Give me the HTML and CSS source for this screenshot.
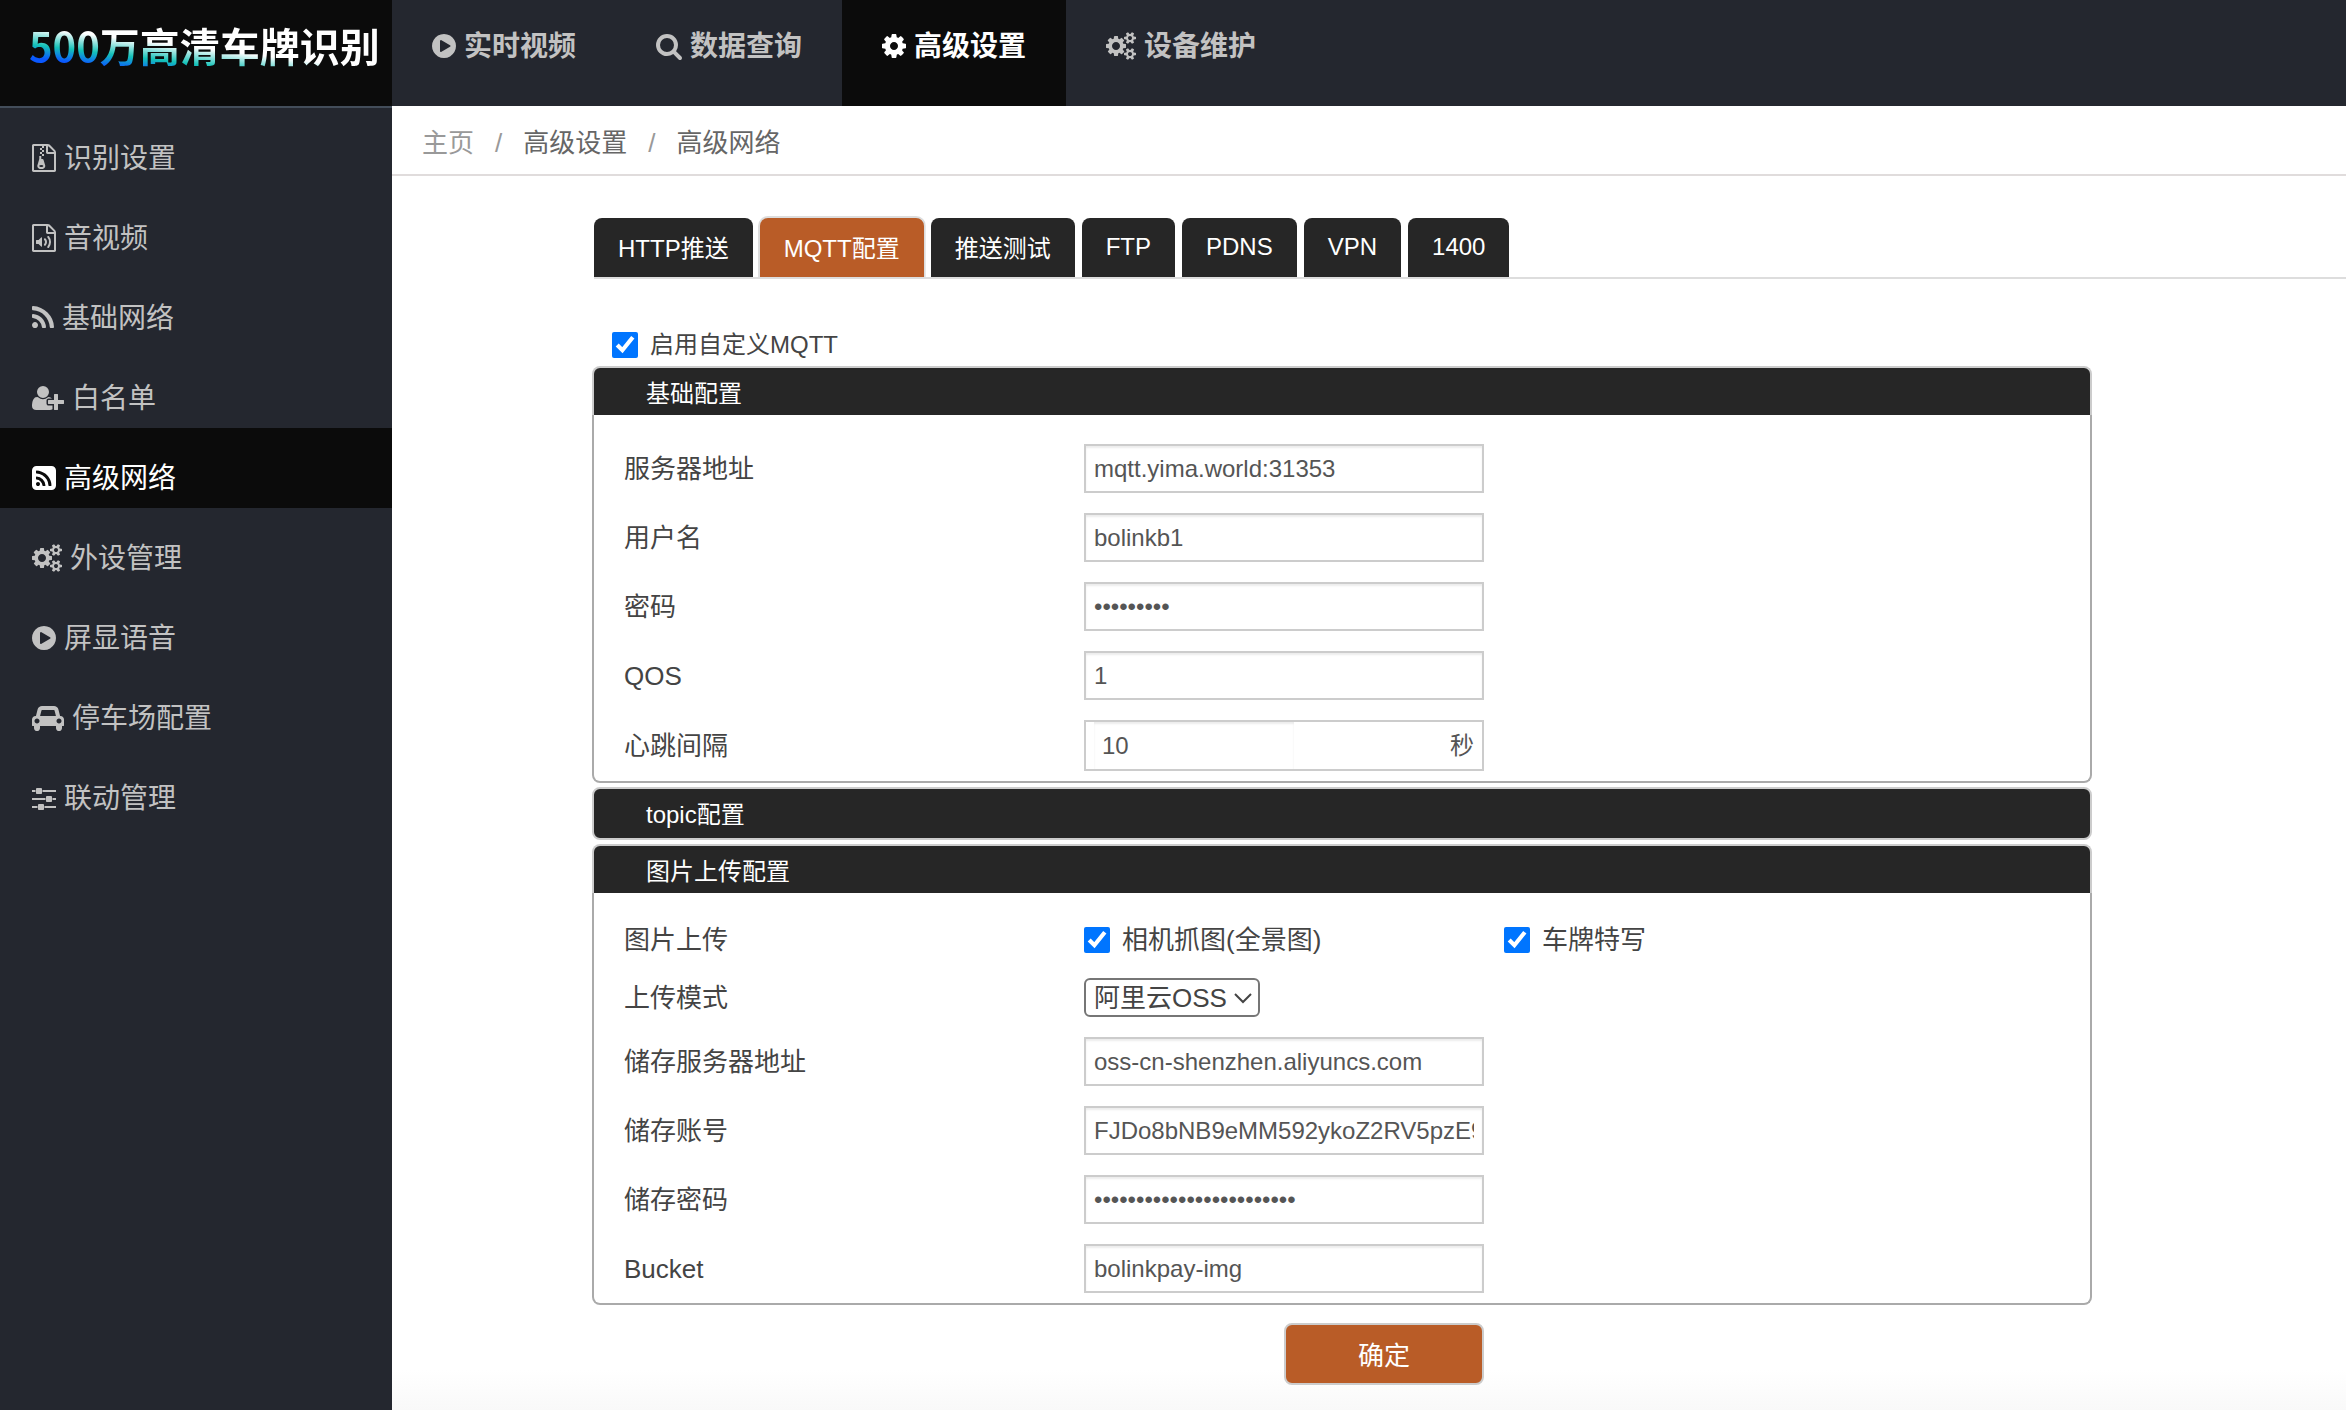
FILE: index.html
```html
<!DOCTYPE html>
<html lang="zh-CN">
<head>
<meta charset="utf-8">
<meta name="viewport" content="width=device-width, initial-scale=1">
<title>高级网络</title>
<link rel="stylesheet" href="styles.css">
</head>
<body>
<svg class="sprite" aria-hidden="true">
  <symbol id="play" viewBox="128 0 1536 1792"><path d="M896 128q209 0 385.500 103t279.500 279.500 103 385.500-103 385.500-279.500 279.500-385.500 103-385.500-103-279.500-279.500-103-385.500 103-385.500 279.500-279.500 385.500-103zm384 823q32-18 32-55t-32-55l-544-320q-31-19-64-1-32 19-32 56v640q0 37 32 56 16 8 32 8 17 0 32-9z"/></symbol>
  <symbol id="search" viewBox="64 0 1664 1792"><path d="M1216 832q0-185-131.500-316.500t-316.500-131.500-316.500 131.500-131.500 316.500 131.500 316.500 316.500 131.500 316.500-131.500 131.500-316.500zm512 832q0 52-38 90t-90 38q-54 0-90-38l-343-342q-179 124-399 124-143 0-273.500-55.500t-225-150-150-225-55.500-273.500 55.500-273.500 150-225 225-150 273.500-55.500 273.500 55.500 225 150 150 225 55.500 273.500q0 220-124 399l343 343q37 37 37 90z"/></symbol>
  <symbol id="cog" viewBox="128 0 1536 1792"><path d="M1152 896q0-106-75-181t-181-75-181 75-75 181 75 181 181 75 181-75 75-181zm512-109v222q0 12-8 23t-20 13l-185 28q-19 54-39 91 35 50 107 138 10 12 10 25t-9 23q-27 37-99 108t-94 71q-12 0-26-9l-138-108q-44 23-91 38-16 136-29 186-7 28-36 28h-222q-14 0-24.500-8.500t-11.500-21.500l-28-184q-49-16-90-37l-141 107q-10 9-25 9-14 0-25-11-126-114-165-168-7-10-7-23 0-12 8-23 15-21 51-66.500t54-70.500q-27-50-41-99l-183-27q-13-2-21-12.500t-8-23.500v-222q0-12 8-23t19-13l186-28q14-46 39-92-40-57-107-138-10-12-10-24 0-10 9-23 26-36 98.500-107.500t94.500-71.500q13 0 26 10l138 107q44-23 91-38 16-136 29-186 7-28 36-28h222q14 0 24.500 8.500t11.500 21.500l28 184q49 16 90 37l142-107q9-9 24-9 13 0 25 10 129 119 165 170 7 8 7 22 0 12-8 23-15 21-51 66.500t-54 70.500q26 50 41 98l183 28q13 2 21 12.500t8 23.500z"/></symbol>
  <symbol id="cogs" viewBox="-64 0 1920 1792"><path d="M832 896q0-106-75-181t-181-75-181 75-75 181 75 181 181 75 181-75 75-181zm768 512q0-52-38-90t-90-38-90 38-38 90q0 53 37.500 90.500t90.500 37.500 90.500-37.500 37.500-90.500zm0-1024q0-52-38-90t-90-38-90 38-38 90q0 53 37.500 90.500t90.500 37.500 90.500-37.500 37.500-90.500zm-384 421v185q0 10-7 19.500t-16 10.500l-155 24q-11 35-32 76 34 48 90 115 7 11 7 20 0 12-7 19-23 30-82.500 89.500t-78.500 59.500q-11 0-21-7l-115-90q-37 19-77 31-11 108-23 155-7 24-30 24h-186q-11 0-20-7.500t-10-17.500l-23-153q-34-10-75-31l-118 89q-7 7-20 7-11 0-21-8-144-133-144-160 0-9 7-19 10-14 41-53t47-61q-23-44-35-82l-152-24q-10-1-17-9.500t-7-19.500v-185q0-10 7-19.500t16-10.500l155-24q11-35 32-76-34-48-90-115-7-11-7-20 0-12 7-20 22-30 82-89t79-59q11 0 21 7l115 90q34-18 77-32 11-108 23-154 7-24 30-24h186q11 0 20 7.500t10 17.500l23 153q34 10 75 31l118-89q8-7 20-7 11 0 21 8 144 133 144 160 0 8-7 19-12 16-42 54t-45 60q23 48 34 82l152 23q10 2 17 10.500t7 19.500zm640 533v140q0 16-149 31-12 27-30 52 51 113 51 138 0 4-4 7-122 71-124 71-8 0-46-47t-52-68q-20 2-30 2t-30-2q-14 21-52 68t-46 47q-2 0-124-71-4-3-4-7 0-25 51-138-18-25-30-52-149-15-149-31v-140q0-16 149-31 13-29 30-52-51-113-51-138 0-4 4-7 4-2 35-20t59-34 30-16q8 0 46 46.500t52 67.500q20-2 30-2t30 2q51-71 92-112l6-2q4 0 124 70 4 3 4 7 0 25-51 138 17 23 30 52 149 15 149 31zm0-1024v140q0 16-149 31-12 27-30 52 51 113 51 138 0 4-4 7-122 71-124 71-8 0-46-47t-52-68q-20 2-30 2t-30-2q-14 21-52 68t-46 47q-2 0-124-71-4-3-4-7 0-25 51-138-18-25-30-52-149-15-149-31v-140q0-16 149-31 13-29 30-52-51-113-51-138 0-4 4-7 4-2 35-20t59-34 30-16q8 0 46 46.500t52 67.500q20-2 30-2t30 2q51-71 92-112l6-2q4 0 124 70 4 3 4 7 0 25-51 138 17 23 30 52 149 15 149 31z"/></symbol>
  <symbol id="zip" viewBox="128 0 1536 1792"><path d="M1596 380q28 28 48 76t20 88v1152q0 40-28 68t-68 28h-1344q-40 0-68-28t-28-68v-1600q0-40 28-68t68-28h896q40 0 88 20t76 48zm-444-244v376h376q-10-29-22-41l-313-313q-12-12-41-22zm384 1528v-1024h-416q-40 0-68-28t-28-68v-416h-768v1536h1280z"/><path d="M640 256h128v128h-128zM768 128h128v128h-128zM768 384h128v128h-128zM640 512h128v128h-128zM768 640h128v128h-128z"/><path d="M863 1008l107 349q8 27 8 52 0 83-72.500 137.500t-183.500 54.500-183.500-54.500-72.500-137.500q0-25 8-52 21-63 120-396v-193h128v193h79q22 0 39 13t23 34zm-141 465q53 0 90.500-19t37.500-45-37.500-45-90.500-19-90.500 19-37.500 45 37.500 45 90.500 19z"/></symbol>
  <symbol id="audio" viewBox="128 0 1536 1792"><path d="M1596 380q28 28 48 76t20 88v1152q0 40-28 68t-68 28h-1344q-40 0-68-28t-28-68v-1600q0-40 28-68t68-28h896q40 0 88 20t76 48zm-444-244v376h376q-10-29-22-41l-313-313q-12-12-41-22zm384 1528v-1024h-416q-40 0-68-28t-28-68v-416h-768v1536h1280z"/><path d="M748 850q20 8 20 30v544q0 22-20 30-8 2-12 2-12 0-23-9l-166-167h-131q-14 0-23-9t-9-23v-192q0-14 9-23t23-9h131l166-167q16-15 35-7zm417 689q31 0 50-24 129-159 129-363t-129-363q-16-21-43-24t-47 14q-21 17-23.500 43.500t14.500 47.500q100 123 100 282t-100 282q-17 21-14.500 47.500t23.500 42.500q18 15 40 15zm-211-148q27 0 47-20 87-93 87-219t-87-219q-18-19-45-20t-46 17-20 44.500 18 46.500q52 57 52 131t-52 131q-19 20-18 46.500t20 44.500q20 17 44 17z"/></symbol>
  <symbol id="rss" viewBox="192 0 1408 1792"><path d="M576 1344q0 80-56 136t-136 56-136-56-56-136 56-136 136-56 136 56 56 136zm512 123q2 28-17 48-18 21-47 21h-135q-25 0-43-16.500t-20-41.500q-22-229-184.500-391.500t-391.500-184.500q-25-2-41.500-20t-16.500-43v-135q0-29 21-47 17-17 43-17h5q160 13 306 80.500t259 181.500q114 113 181.500 259t80.500 306zm512 2q2 27-18 47-18 20-46 20h-143q-26 0-44.500-17.500t-19.500-42.500q-12-215-101-408.500t-231.500-336-336-231.500-408.500-102q-25-1-42.500-19.500t-17.500-43.500v-143q0-28 20-46 18-18 44-18h3q262 13 501.500 120t425.500 294q187 186 294 425.500t120 501.500z"/></symbol>
  <symbol id="user" viewBox="-128 0 2048 1792"><path d="M576 896q-159 0-271.500-112.500t-112.500-271.500 112.500-271.500 271.500-112.500 271.500 112.500 112.500 271.500-112.500 271.500-271.500 112.500zm960 128h352q13 0 22.500 9.500t9.500 22.500v192q0 13-9.500 22.500t-22.500 9.500h-352v352q0 13-9.500 22.500t-22.500 9.500h-192q-13 0-22.500-9.500t-9.500-22.500v-352h-352q-13 0-22.500-9.500t-9.500-22.500v-192q0-13 9.500-22.500t22.500-9.500h352v-352q0-13 9.500-22.500t22.500-9.500h192q13 0 22.500 9.500t9.500 22.500v352zm-736 224q0 52 38 90t90 38h256v238q-68 50-171 50h-874q-121 0-194-69t-73-190q0-53 3.500-103.500t14-109 26.500-108.500 43-97.500 62-81 85.500-53.500 111.500-20q19 0 39 17 79 61 154.500 91.500t164.500 30.500 164.500-30.500 154.500-91.500q20-17 39-17 132 0 217 96h-223q-52 0-90 38t-38 90v192z"/></symbol>
  <symbol id="rss-square" viewBox="128 0 1536 1792"><path d="M640 1280q0-53-37.500-90.500t-90.500-37.500-90.500 37.500-37.500 90.500 37.500 90.500 90.500 37.500 90.500-37.500 37.500-90.500zm351 94q-13-232-177-396t-396-177q-14-1-24 9t-10 23v128q0 13 8.500 22t21.500 10q154 11 264 121t121 264q1 13 10 21.500t22 8.500h128q13 0 23-10t9-24zm384 1q-5-154-56-297.500t-139.500-260-205-205-260-139.500-297.500-56q-14-1-23 9-10 10-10 23v128q0 13 9 22t22 10q204 7 378 111.500t278.500 278.500 111.500 378q1 13 10 22t22 9h128q13 0 23-10 11-9 9-23zm289-959v960q0 119-84.500 203.500t-203.500 84.500h-960q-119 0-203.500-84.500t-84.500-203.500v-960q0-119 84.500-203.500t203.500-84.500h960q119 0 203.500 84.500t84.500 203.500z"/></symbol>
  <symbol id="car" viewBox="-128 0 2048 1792"><path d="M352 1088q0-66-47-113t-113-47-113 47-47 113 47 113 113 47 113-47 47-113zm36-320h1016l-89-357q-2-8-14-17.500t-21-9.500h-768q-9 0-21 9.500t-14 17.500zm1372 320q0-66-47-113t-113-47-113 47-47 113 47 113 113 47 113-47 47-113zm160-96v384q0 14-9 23t-23 9h-96v128q0 80-56 136t-136 56-136-56-56-136v-128h-1024v128q0 80-56 136t-136 56-136-56-56-136v-128h-96q-14 0-23-9t-9-23v-384q0-93 65.500-158.500t158.500-65.500h28l105-419q23-94 104-157.500t179-63.500h768q98 0 179 63.500t104 157.500l105 419h28q93 0 158.500 65.500t65.500 158.500z"/></symbol>
  <symbol id="sliders" viewBox="128 0 1536 1792"><path d="M480 1408v128h-352v-128h352zm352-128q26 0 45 19t19 45v256q0 26-19 45t-45 19h-256q-26 0-45-19t-19-45v-256q0-26 19-45t45-19h256zm160-384v128h-864v-128h864zm-640-512v128h-224v-128h224zm1312 1024v128h-736v-128h736zm-960-1152q26 0 45 19t19 45v256q0 26-19 45t-45 19h-256q-26 0-45-19t-19-45v-256q0-26 19-45t45-19h256zm640 512q26 0 45 19t19 45v256q0 26-19 45t-45 19h-256q-26 0-45-19t-19-45v-256q0-26 19-45t45-19h256zm320 128v128h-224v-128h224zm0-512v128h-864v-128h864z"/></symbol>
</svg>

<div class="layout">
  <aside class="sidebar">
    <h1 class="brand">500万高清车牌识别</h1>
    <nav class="menu" aria-label="侧边菜单">
      <a class="menu-item" href="#"><svg class="icon w24"><use href="#zip"/></svg>识别设置</a>
      <a class="menu-item" href="#"><svg class="icon w24"><use href="#audio"/></svg>音视频</a>
      <a class="menu-item" href="#"><svg class="icon w22"><use href="#rss"/></svg>基础网络</a>
      <a class="menu-item" href="#"><svg class="icon w32"><use href="#user"/></svg>白名单</a>
      <a class="menu-item active" href="#"><svg class="icon w24"><use href="#rss-square"/></svg>高级网络</a>
      <a class="menu-item" href="#"><svg class="icon w30"><use href="#cogs"/></svg>外设管理</a>
      <a class="menu-item" href="#"><svg class="icon w24"><use href="#play"/></svg>屏显语音</a>
      <a class="menu-item" href="#"><svg class="icon w32"><use href="#car"/></svg>停车场配置</a>
      <a class="menu-item" href="#"><svg class="icon w24"><use href="#sliders"/></svg>联动管理</a>
    </nav>
  </aside>

  <div class="page">
    <nav class="topnav" aria-label="主菜单">
      <a class="top-item" href="#"><svg class="icon w24"><use href="#play"/></svg>实时视频</a>
      <a class="top-item" href="#"><svg class="icon w26"><use href="#search"/></svg>数据查询</a>
      <a class="top-item active" href="#"><svg class="icon w24"><use href="#cog"/></svg>高级设置</a>
      <a class="top-item" href="#"><svg class="icon w30"><use href="#cogs"/></svg>设备维护</a>
    </nav>
    <div class="crumbs">
      <a class="crumb-home" href="#">主页</a>
      <span class="crumb-sep">/</span>
      <span>高级设置</span>
      <span class="crumb-sep">/</span>
      <span>高级网络</span>
    </div>

    <main class="content">
      <div class="tabs" role="tablist">
        <button class="tab" type="button" role="tab">HTTP推送</button>
        <button class="tab active" type="button" role="tab" aria-selected="true">MQTT配置</button>
        <button class="tab" type="button" role="tab">推送测试</button>
        <button class="tab" type="button" role="tab">FTP</button>
        <button class="tab" type="button" role="tab">PDNS</button>
        <button class="tab" type="button" role="tab">VPN</button>
        <button class="tab" type="button" role="tab">1400</button>
      </div>

      <form class="form">
        <label class="enable"><input class="check" type="checkbox" checked>启用自定义MQTT</label>

        <section class="panel">
          <h2 class="panel-title">基础配置</h2>
          <div class="panel-body">
            <div class="row"><label for="server">服务器地址</label><input class="field" id="server" type="text" value="mqtt.yima.world:31353"></div>
            <div class="row"><label for="user-name">用户名</label><input class="field" id="user-name" type="text" value="bolinkb1"></div>
            <div class="row"><label for="pass">密码</label><input class="field" id="pass" type="password" value="123456789"></div>
            <div class="row"><label for="qos">QOS</label><input class="field" id="qos" type="text" value="1"></div>
            <div class="row"><label for="beat">心跳间隔</label><div class="unit-field"><input class="unit-input" id="beat" type="text" value="10"><span>秒</span></div></div>
          </div>
        </section>

        <section class="panel">
          <h2 class="panel-title collapsed">topic配置</h2>
        </section>

        <section class="panel">
          <h2 class="panel-title">图片上传配置</h2>
          <div class="panel-body">
            <div class="row checks">
              <span>图片上传</span>
              <label class="option"><input class="check" type="checkbox" checked>相机抓图(全景图)</label>
              <label class="option"><input class="check" type="checkbox" checked>车牌特写</label>
            </div>
            <div class="row"><label for="mode">上传模式</label><select class="select" id="mode"><option>阿里云OSS</option></select></div>
            <div class="row"><label for="store">储存服务器地址</label><input class="field" id="store" type="text" value="oss-cn-shenzhen.aliyuncs.com"></div>
            <div class="row"><label for="account">储存账号</label><input class="field" id="account" type="text" value="FJDo8bNB9eMM592ykoZ2RV5pzE9"></div>
            <div class="row"><label for="secret">储存密码</label><input class="field" id="secret" type="password" value="123456789012345678901234"></div>
            <div class="row"><label for="bucket">Bucket</label><input class="field" id="bucket" type="text" value="bolinkpay-img"></div>
          </div>
        </section>

        <div class="actions"><button class="submit" type="submit">确定</button></div>
      </form>
    </main>
  </div>
</div>
</body>
</html>
```

FILE: styles.css
```css
* {
  box-sizing: border-box;
}

body {
  margin: 0;
  background: #fff;
  color: #444;
  font-family: "Liberation Sans", "Noto Sans CJK SC", sans-serif;
  font-size: 26px;
  line-height: 36px;
}

a {
  color: inherit;
  text-decoration: none;
}

button,
input,
select {
  font-family: inherit;
  margin: 0;
}

.sprite {
  display: none;
}

.icon {
  flex: none;
  height: 28px;
  margin-bottom: 2px;
  fill: currentColor;
}

.w22 { width: 22px; }
.w24 { width: 24px; }
.w26 { width: 26px; }
.w30 { width: 30px; }
.w32 { width: 32px; }

.layout {
  display: grid;
  grid-template-columns: 392px minmax(0, 1fr);
  min-height: 100vh;
}

/* Sidebar */
.sidebar {
  background: #24272f;
}

.brand {
  height: 106px;
  margin: 0;
  padding: 16px 0 0 29px;
  font-family: "Noto Sans CJK SC", sans-serif;
  font-size: 40px;
  font-weight: 700;
  line-height: 58px;
  white-space: nowrap;
  color: transparent;
  background:
    linear-gradient(7deg, #0a58ff 52px, #14c2b8 65px, #fff 82px) text,
    #0b0b0b;
}

.menu {
  border-top: 2px solid #434d5a;
}

.menu-item {
  display: flex;
  align-items: center;
  gap: 8px;
  height: 80px;
  padding: 22px 0 0 32px;
  color: #c2c2c2;
  font-size: 28px;
}

.menu-item.active,
.top-item.active {
  background: #0b0b0b;
  color: #fff;
}

/* Top navigation */
.page {
  background: linear-gradient(to top, #f9f9f9, #fff 40px);
}

.topnav {
  display: flex;
  height: 106px;
  background: #24272f;
}

.top-item {
  display: flex;
  align-items: center;
  gap: 8px;
  padding: 0 40px 12px;
  color: #c2c2c2;
  font-size: 28px;
  font-weight: 700;
}

.crumbs {
  display: flex;
  gap: 21px;
  height: 70px;
  padding: 19px 30px 0;
  border-bottom: 2px solid #e0dcdc;
  color: #666;
}

.crumb-home,
.crumb-sep {
  color: #999;
}

/* Tabs */
.content {
  padding: 42px 0 20px 200px;
}

.tabs {
  display: flex;
  gap: 7px;
  margin-left: 2px;
  border-bottom: 2px solid #ddd;
}

.tab {
  height: 59px;
  padding: 0 24px 2px;
  border: 0;
  border-radius: 8px 8px 0 0;
  background: #262626;
  color: #fff;
  font-size: 24px;
}

.tab.active {
  background: #b95c27;
  box-shadow: 0 0 0 2px #ddd;
  clip-path: inset(-2px -2px 0);
}

/* Form */
.form {
  margin-right: 254px;
  padding-top: 48px;
}

.enable {
  display: flex;
  align-items: center;
  gap: 12px;
  width: max-content;
  margin: 0 0 3px 20px;
  font-size: 24px;
}

.check {
  width: 26px;
  height: 26px;
  accent-color: #0075ff;
}

.panel {
  margin-bottom: 4px;
}

.panel-title {
  height: 49px;
  margin: 0;
  padding: 8px 52px 0;
  border: 2px solid #ccc;
  border-bottom: 0;
  border-radius: 8px 8px 0 0;
  background: #262626;
  color: #fff;
  font-size: 24px;
  font-weight: 400;
}

.panel-title.collapsed {
  height: 53px;
  border-bottom: 2px solid #ccc;
  border-radius: 8px;
}

.panel-body {
  display: grid;
  gap: 20px;
  padding: 29px 30px 10px;
  border: 2px solid #aaa;
  border-top: 0;
  border-radius: 0 0 8px 8px;
}

.row {
  display: grid;
  grid-template-columns: 460px 400px;
  align-items: center;
}

.row.checks {
  grid-template-columns: 460px 420px 400px;
}

.option {
  display: flex;
  align-items: center;
  gap: 12px;
}

.field,
.unit-field {
  height: 49px;
  padding: 0 8px;
  border: 2px solid #ccc;
  background: #fff;
  color: #555;
  font-size: 24px;
}

.field,
.unit-input {
  box-shadow: inset 0 2px 2px rgba(0, 0, 0, 0.08);
}

.unit-field {
  display: flex;
  align-items: center;
  justify-content: space-between;
  height: 51px;
}

.unit-input {
  width: 200px;
  height: 47px;
  padding: 0 8px;
  border: 0;
  background: transparent;
  color: inherit;
  font-size: 24px;
}

.select {
  justify-self: start;
  width: 176px;
  height: 39px;
  padding: 0 8px;
  border: 2px solid #767676;
  border-radius: 6px;
  appearance: none;
  background: #fff url("data:image/svg+xml,%3Csvg xmlns='http://www.w3.org/2000/svg' width='18' height='12'%3E%3Cpath d='M1 2l8 8 8-8' fill='none' stroke='%23444' stroke-width='2'/%3E%3C/svg%3E") no-repeat right 6px center;
  color: #444;
  font-size: 26px;
}

.actions {
  display: flex;
  justify-content: flex-end;
  width: 892px;
  padding-top: 14px;
}

.submit {
  width: 200px;
  height: 62px;
  padding-bottom: 3px;
  border: 2px solid #ccc;
  border-radius: 8px;
  background: #b95c27;
  color: #fff;
  font-size: 26px;
}
```
